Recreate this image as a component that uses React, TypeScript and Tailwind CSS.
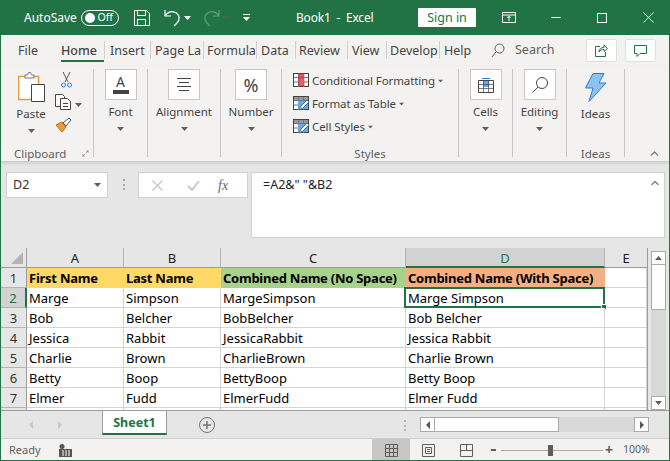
import { ChevronUp, Maximize2 } from 'lucide-react';

const tabs = [
  { label: 'File', w: 'w-[60px]', pl: 'pl-[17px]' },
  { label: 'Home', w: 'w-[43px]', pl: 'pl-[0px]', active: true },
  { label: 'Insert', w: 'w-[46px]', pl: 'pl-[6px]', sep: true },
  { label: 'Page La', w: 'w-[53px]', pl: 'pl-[5px]', sep: true },
  { label: 'Formula', w: 'w-[53px]', pl: 'pl-[4px]', sep: true },
  { label: 'Data', w: 'w-[39px]', pl: 'pl-[5px]', sep: true },
  { label: 'Review', w: 'w-[52px]', pl: 'pl-[4px]', sep: true },
  { label: 'View', w: 'w-[39px]', pl: 'pl-[5px]', sep: true },
  { label: 'Develop', w: 'w-[53px]', pl: 'pl-[4px]', sep: true },
  { label: 'Help', w: 'w-[39px]', pl: 'pl-[5px]', sep: true },
];

const rows = [
  ['Marge', 'Simpson'],
  ['Bob', 'Belcher'],
  ['Jessica', 'Rabbit'],
  ['Charlie', 'Brown'],
  ['Betty', 'Boop'],
  ['Elmer', 'Fudd'],
];

function Caret({ className = '' }: { className?: string }) {
  return (
    <svg width="7" height="4" viewBox="0 0 7 4" className={className}>
      <path d="M0 0h7L3.5 4z" fill="#605e5c" />
    </svg>
  );
}

function BigGroup({ label, width, children }: { label: string; width: string; children: React.ReactNode }) {
  return (
    <div className={`${width} h-[88px] mt-[3px] border-r border-[#c8c6c4] flex flex-col items-center shrink-0`}>
      <div className="w-[32px] h-[31px] bg-white border border-[#c8c6c4] flex items-center justify-center">
        {children}
      </div>
      <div className="mt-[4px] text-[11.5px] leading-[16px] text-[#444]">{label}</div>
      <Caret className="mt-[7px]" />
    </div>
  );
}

function StyleRow({ label, children }: { label: string; children: React.ReactNode }) {
  return (
    <div className="h-[23px] flex items-center gap-[3px] text-[11.5px] tracking-[-0.1px] text-[#444]">
      {children}
      <span>{label}</span>
      <Caret className="-ml-[1px] scale-75" />
    </div>
  );
}

function TableIcon({ brush = false }: { brush?: boolean }) {
  return (
    <svg width="16" height="15" viewBox="0 0 16 15">
      <rect x="0.5" y="0.5" width="15" height="13" fill="#fff" stroke="#444" />
      <path d="M1 1h14v3H1z" fill="#6b6b6b" opacity={brush ? 0.7 : 0} />
      <path d="M5.5 1v13M10.5 1v13M1 4.5h14M1 9h14" stroke="#777" />
      {brush ? (
        <>
          <path d="M5 5h10v8H5z" fill="#69a9e3" />
          <path d="M6 14l2-4 6-6 2 2-6 6z" fill="#fff" stroke="#2b6cb0" />
        </>
      ) : (
        <path d="M6 1h5v3H6zM6 5h5v8H6z" fill="#e8606a" stroke="#c6303b" strokeWidth="0.6" />
      )}
    </svg>
  );
}

function Cell({ children, className = 'bg-white border-[#d4d4d4]' }: { children?: React.ReactNode; className?: string }) {
  return (
    <div className={`h-[20px] border-r border-b pl-[2px] text-[13px] leading-[20px] text-black whitespace-nowrap ${className}`}>
      {children}
    </div>
  );
}

function HeaderCell({ children, className }: { children: React.ReactNode; className: string }) {
  return <Cell className={`font-bold text-[12.5px] tracking-[-0.25px] ${className}`}>{children}</Cell>;
}

function RowHead({ n, active = false }: { n?: number; active?: boolean }) {
  return (
    <div className={`h-[20px] border-b border-[#b4b4b4] text-[13px] leading-[20px] text-center ${active ? 'bg-[#d2d2d2] border-r-2 border-r-[#217346] text-[#217346]' : 'bg-[#e6e6e6] border-r border-r-[#9c9c9c] text-[#333]'}`}>
      {n}
    </div>
  );
}

function ColHead({ label, active = false }: { label: string; active?: boolean }) {
  return (
    <div className={`h-[20px] text-center text-[13px] leading-[20px] border-r ${active ? 'bg-[#d2d2d2] border-r-[#b4b4b4] border-b-2 border-b-[#217346] text-[#217346]' : 'bg-[#e6e6e6] border-r-[#b4b4b4] border-b border-b-[#9c9c9c] text-[#222]'}`}>
      {label}
    </div>
  );
}

export default function App() {
  return (
    <div className="w-[670px] h-[461px] overflow-hidden flex flex-col border-x border-b border-[#217346] bg-[#e6e6e6] font-['Noto_Sans',sans-serif] select-none">
      {/* title bar */}
      <div className="h-[35px] -mx-px shrink-0 bg-[#217346] flex items-center text-white text-[12.5px]">
        <span className="ml-[24px] w-[57px] text-[12px]">AutoSave</span>
        <div className="w-[38px] h-[16px] rounded-full border border-white flex items-center justify-between px-[3px]">
          <span className="w-[10px] h-[10px] rounded-full bg-white" />
          <span className="text-[10.5px] leading-none mr-[2px]">Off</span>
        </div>
        <svg width="16" height="16" viewBox="0 0 16 16" className="ml-[15px]" fill="none" stroke="#fff">
          <path d="M.5.5h12l3 3v12H.5zM3.5.5v5h8v-5M3.5 15.5v-6h8v6" />
        </svg>
        <svg width="18" height="18" viewBox="0 0 18 18" className="ml-[14px]" fill="none" stroke="#fff" strokeWidth="1.2">
          <path d="M1 1v6h6M1.5 6.5C4 3 8 2 11.5 3.5 16 6 16 11 13 14l-3 3" />
        </svg>
        <Caret className="ml-[2px] brightness-[8]" />
        <svg width="18" height="18" viewBox="0 0 18 18" className="ml-[11px]" fill="none" stroke="#5d9c7f" strokeWidth="1.2">
          <path d="M17 1v6h-6M16.500 6.500C14 3 10 2 6.500 3.500 2 6 2 11 5 14l3 3" />
        </svg>
        <Caret className="ml-[2px] opacity-50" />
        <svg width="7" height="8" viewBox="0 0 7 8" className="ml-[14px]">
          <path d="M0 0h7v1H0zM0 3h7L3.500 7z" fill="#fff" />
        </svg>
        <span className="ml-[46px] w-[122px] whitespace-nowrap text-[12px] tracking-[-0.2px]">Book1&nbsp;&nbsp;-&nbsp;&nbsp;Excel</span>
        <div className="w-[58px] h-[19px] bg-white rounded-[1px] text-[#217346] text-center leading-[19px]">Sign in</div>
        <svg width="14" height="11" viewBox="0 0 14 11" className="ml-[26px]" fill="none" stroke="#fff">
          <path d="M.500.500h13v10H.500zM.500 3h13M7 9V4.500M5 6l2-2 2 2" />
        </svg>
        <div className="ml-[35px] w-[10px] h-px bg-white" />
        <div className="ml-[36px] w-[10px] h-[10px] border border-white" />
        <svg width="11" height="11" viewBox="0 0 11 11" className="ml-[36px]" stroke="#fff">
          <path d="M.500.500l10 10M10.500.500l-10 10" />
        </svg>
      </div>

      {/* tabs */}
      <div className="h-[31px] shrink-0 bg-[#f3f2f1] flex items-center text-[12.5px] text-[#444]">
        {tabs.map((t) => (
          <div key={t.label} className={`${t.w} ${t.pl} relative h-[31px] leading-[31px] whitespace-nowrap shrink-0`}>
            {t.sep && <span className="absolute left-0 top-[6px] h-[18px] w-px bg-[#d2d0ce]" />}
            <span className={`block ${t.active ? 'font-medium border-b-2 border-[#217346] h-[27px]' : ''}`}>{t.label}</span>
          </div>
        ))}
        <svg width="14" height="15" viewBox="0 0 14 15" className="ml-[13px] shrink-0" fill="none" stroke="#605e5c">
          <circle cx="8.500" cy="5.500" r="4.500" />
          <path d="M5 9l-4 5" />
        </svg>
        <span className="ml-[10px] w-[71px] text-[#605e5c]">Search</span>
        <div className="w-[31px] h-[23px] bg-white rounded-[2px] border border-[#e1dfdd] flex items-center justify-center">
          <svg width="13" height="13" viewBox="0 0 13 13" fill="none" stroke="#217346">
            <path d="M5 2.500H.500v10h10V8M4 8c0-3 2-4.500 5-4.500V1l3.500 3.500L9 7.500V5.500C7 5.500 5 6 4 8z" />
          </svg>
        </div>
        <div className="ml-[8px] w-[31px] h-[23px] bg-white rounded-[2px] border border-[#e1dfdd] flex items-center justify-center">
          <svg width="13" height="12" viewBox="0 0 13 12" fill="none" stroke="#217346">
            <path d="M.500.500h12v8H6l-3 3v-3H.500z" />
          </svg>
        </div>
      </div>

      {/* ribbon */}
      <div className="h-[95px] shrink-0 bg-[#f3f2f1] shadow-[0_2px_3px_#c8c8c8] flex relative">
        <div className="w-[93px] h-[88px] mt-[3px] border-r border-[#c8c6c4] relative shrink-0 flex">
          <div className="w-[52px] flex flex-col items-center pl-[8px]">
            <svg width="27" height="30" viewBox="0 0 27 30" className="mt-[3px]">
              <path d="M.5 4.500h20v23H.5z" fill="#fff" stroke="#e69a3c" strokeWidth="1.500" />
              <path d="M7 4.500V3h2.500L10.500.500l2 0L13.500 3H16v3H7z" fill="#fff" stroke="#777" />
              <path d="M13.500 12.500h13v17h-13z" fill="#fff" stroke="#444" />
            </svg>
            <span className="mt-[4px] text-[11.5px] leading-[16px] text-[#444]">Paste</span>
            <Caret className="mt-[7px]" />
          </div>
          <div className="w-[26px] ml-[2px] flex flex-col items-start">
            <svg width="11" height="16" viewBox="0 0 11 16" className="mt-[3px] ml-[6px]" fill="none">
              <path d="M2 0l5 10M9 0L4 10" stroke="#555" />
              <circle cx="2.500" cy="13" r="2" stroke="#2b7cd3" />
              <circle cx="8.500" cy="13" r="2" stroke="#2b7cd3" />
            </svg>
            <svg width="17" height="16" viewBox="0 0 17 16" className="mt-[6px]" fill="#fff" stroke="#444">
              <path d="M.500.500h7l2 2v10H.500z" />
              <path d="M5.500 4.500h7l3 3v8h-10z" />
              <path d="M8 9.500h5M8 12.500h5" />
            </svg>
            <svg width="17" height="16" viewBox="0 0 17 16" className="mt-[7px]">
              <path d="M1 8l6 7 4-5-4-5z" fill="#ed9a3c" stroke="#c46a10" />
              <path d="M8 6l6-5 2 2-5 6z" fill="#fff" stroke="#555" />
            </svg>
          </div>
          <Caret className="absolute left-[74px] top-[34px]" />
          <span className="absolute left-[13px] top-[77px] text-[11.5px] leading-[16px] text-[#605e5c]">Clipboard</span>
          <Maximize2 className="absolute left-[81px] top-[81px] w-[7px] h-[7px] text-[#777]" />
        </div>

        <BigGroup label="Font" width="w-[54px]">
          <div className="flex flex-col items-center">
            <span className="text-[14px] leading-[13px] text-[#444]">A</span>
            <span className="w-[16px] h-[4px] bg-[#444] mt-[2px]" />
          </div>
        </BigGroup>
        <BigGroup label="Alignment" width="w-[73px]">
          <svg width="14" height="13" viewBox="0 0 14 13" stroke="#444">
            <path d="M0 .500h14M2 4.500h10M0 8.500h14M2 12.500h10" />
          </svg>
        </BigGroup>
        <BigGroup label="Number" width="w-[61px]">
          <span className="text-[18px] leading-none text-[#444]">%</span>
        </BigGroup>

        <div className="w-[177px] h-[88px] mt-[3px] border-r border-[#c8c6c4] pl-[11px] relative shrink-0">
          <StyleRow label="Conditional Formatting"><TableIcon /></StyleRow>
          <StyleRow label="Format as Table"><TableIcon brush /></StyleRow>
          <StyleRow label="Cell Styles"><TableIcon brush /></StyleRow>
          <span className="absolute left-0 right-0 top-[77px] text-center text-[11.5px] leading-[16px] text-[#605e5c]">Styles</span>
        </div>

        <BigGroup label="Cells" width="w-[54px]">
          <svg width="16" height="16" viewBox="0 0 16 16" fill="none" stroke="#444">
            <path d="M4 1.500h8" stroke="#2b7cd3" />
            <path d="M.500 3.500h15v12H.500z" />
            <path d="M5 4h6v6H5z" fill="#69a9e3" stroke="none" />
            <path d="M5.500 4v11M10.500 4v11M1 7.500h14M1 11.500h14" strokeWidth="0.700" />
          </svg>
        </BigGroup>
        <BigGroup label="Editing" width="w-[54px]">
          <svg width="16" height="16" viewBox="0 0 16 16" fill="none" stroke="#444">
            <circle cx="10" cy="6" r="5.500" />
            <path d="M6 10l-5.500 5.500" />
          </svg>
        </BigGroup>

        <div className="w-[58px] h-[88px] mt-[3px] border-r border-[#c8c6c4] flex flex-col items-center relative shrink-0">
          <svg width="22" height="29" viewBox="0 0 22 29" className="mt-[4px]">
            <path d="M8 .500h11L14 10h7L4 28.500 8 15H.500z" fill="#8fc1ee" stroke="#2b7cd3" />
          </svg>
          <span className="mt-[4px] text-[11.5px] leading-[16px] text-[#444]">Ideas</span>
          <span className="absolute left-0 right-0 top-[77px] text-center text-[11.5px] leading-[16px] text-[#605e5c]">Ideas</span>
        </div>
        <ChevronUp className="absolute left-[647px] top-[81px] w-[13px] h-[13px] text-[#777]" strokeWidth={2.500} />
      </div>

      {/* formula bar */}
      <div className="h-[87px] shrink-0 flex items-start pt-[11px] pl-[5px] text-[12.5px]">
        <div className="w-[102px] h-[26px] bg-white border border-[#d0d0d0] flex items-center justify-between pl-[6px] pr-[6px] text-[#333]">
          <span>D2</span>
          <Caret />
        </div>
        <div className="w-[3px] h-[11px] ml-[15px] mt-[7px] border-l-2 border-dotted border-[#aaa]" />
        <div className="ml-[12px] w-[110px] h-[26px] bg-white border border-[#d0d0d0] flex items-center text-[#c8c8c8]">
          <svg width="11" height="11" viewBox="0 0 11 11" className="ml-[13px]" stroke="#c8c8c8" strokeWidth="1.500">
            <path d="M.500.500l10 10M10.500.500l-10 10" />
          </svg>
          <svg width="13" height="11" viewBox="0 0 13 11" className="ml-[24px]" fill="none" stroke="#c8c8c8" strokeWidth="2">
            <path d="M1 6l4 4 7-9" />
          </svg>
          <span className="ml-[18px] font-['Liberation_Serif',serif] italic text-[14px] text-[#666]">fx</span>
        </div>
        <div className="ml-[3px] w-[414px] h-[66px] bg-white border border-[#d0d0d0] pl-[11px] pt-[3px] text-[#222] relative">
          =A2&amp;" "&amp;B2
          <ChevronUp className="absolute right-[3px] top-[4px] w-[12px] h-[12px] text-[#777]" strokeWidth={2.500} />
        </div>
      </div>

      {/* sheet */}
      <div className="h-[162px] shrink-0 flex overflow-hidden">
        <div className="w-[646px] shrink-0 grid grid-cols-[26px_97px_97px_185px_199px_42px] content-start">
          <div className="h-[20px] bg-[#e6e6e6] border-r border-b border-[#9c9c9c] relative overflow-hidden">
            <span className="absolute right-[3px] bottom-[3px] w-0 h-0 border-l-[12px] border-b-[12px] border-l-transparent border-b-[#b4b4b4]" />
          </div>
          <ColHead label="A" />
          <ColHead label="B" />
          <ColHead label="C" />
          <ColHead label="D" active />
          <div className="h-[20px] bg-[#e6e6e6] border-b border-b-[#9c9c9c] text-center text-[13px] leading-[20px] text-[#222]">E</div>

          <RowHead n={1} />
          <HeaderCell className="bg-[#ffd966] border-[#ffd966]">First Name</HeaderCell>
          <HeaderCell className="bg-[#ffd966] border-[#ffd966]">Last Name</HeaderCell>
          <HeaderCell className="bg-[#a9d18e] border-[#a9d18e]">Combined Name (No Space)</HeaderCell>
          <HeaderCell className="bg-[#f4b084] border-[#f4b084]">Combined Name (With Space)</HeaderCell>
          <Cell />

          {rows.map(([first, last], i) => (
            <div key={first} className="contents">
              <RowHead n={i + 2} active={i === 0} />
              <Cell>{first}</Cell>
              <Cell>{last}</Cell>
              <Cell>{first + last}</Cell>
              <Cell className="bg-white border-[#d4d4d4] relative">
                {first + ' ' + last}
                {i === 0 && (
                  <>
                    {/* selected cell outline */}
                    <span className="absolute -left-[2px] -top-[1px] w-[201px] h-[21px] border-2 border-[#217346]" />
                    <span className="absolute -right-[3px] -bottom-[3px] w-[6px] h-[6px] bg-[#217346] border border-white" />
                  </>
                )}
              </Cell>
              <Cell />
            </div>
          ))}
          <RowHead />
          <Cell />
          <Cell />
          <Cell />
          <Cell />
          <Cell />
        </div>
        <div className="w-px shrink-0 bg-[#9c9c9c]" />
        <div className="ml-[3px] w-[15px] mt-[3px] h-[159px] bg-[#d8d8d8] flex flex-col">
          <div className="h-[14px] bg-white border border-[#aaa] flex items-center justify-center"><Caret className="rotate-180" /></div>
          <div className="h-[45px] bg-white border-x border-b border-[#aaa]" />
          <div className="flex-1" />
          <div className="h-[14px] bg-white border border-[#aaa] flex items-center justify-center"><Caret /></div>
        </div>
      </div>

      {/* sheet tabs */}
      <div className="h-[29px] shrink-0 border-t border-t-[#9c9c9c] border-b border-b-[#d0d0d0] flex items-start bg-[#e6e6e6]">
        <svg width="4" height="8" viewBox="0 0 4 8" className="ml-[28px] mt-[10px]"><path d="M4 0v8L0 4z" fill="#c8c8c8" /></svg>
        <svg width="4" height="8" viewBox="0 0 4 8" className="ml-[25px] mt-[10px]"><path d="M0 0v8l4-4z" fill="#c8c8c8" /></svg>
        <div className="ml-[40px] w-[65px] h-[24px] bg-white border-x border-[#9c9c9c] border-b-2 border-b-[#217346] text-[#217346] font-bold text-[12.5px] leading-[24px] text-center">Sheet1</div>
        <svg width="16" height="16" viewBox="0 0 16 16" className="ml-[32px] mt-[6px]" fill="none" stroke="#777">
          <circle cx="8" cy="8" r="7.500" />
          <path d="M8 4v8M4 8h8" strokeWidth="1.500" />
        </svg>
        <div className="ml-[189px] mt-[9px] w-[2px] h-[11px] border-l-2 border-dotted border-[#b4b4b4]" />
        <div className="ml-[14px] mt-[6px] w-[229px] h-[15px] flex bg-[#d8d8d8]">
          <div className="w-[15px] bg-white border border-[#aaa] flex items-center justify-center">
            <svg width="4" height="8" viewBox="0 0 4 8"><path d="M4 0v8L0 4z" fill="#555" /></svg>
          </div>
          <div className="w-[124px] bg-white border-y border-r border-[#aaa]" />
          <div className="flex-1" />
          <div className="w-[15px] bg-white border border-[#aaa] flex items-center justify-center">
            <svg width="4" height="8" viewBox="0 0 4 8"><path d="M0 0v8l4-4z" fill="#555" /></svg>
          </div>
        </div>
      </div>

      {/* status bar */}
      <div className="flex-1 bg-[#f3f2f1] flex items-center text-[11px] text-[#605e5c]">
        <span className="ml-[8px] w-[50px]">Ready</span>
        <svg width="13" height="13" viewBox="0 0 13 13">
          <circle cx="3" cy="2.500" r="2.500" fill="#555" />
          <path d="M0 5h13v8H0z" fill="#555" />
          <path d="M3 7h2M6 7h2M9 7h2M3 9h2M6 9h2M9 9h2M3 11h2M6 11h2M9 11h2" stroke="#fff" />
        </svg>
        <div className="ml-[300px] w-[38px] h-[22px] bg-[#c8c6c4] flex items-center justify-center">
          <svg width="13" height="13" viewBox="0 0 13 13" fill="none" stroke="#605e5c"><path d="M.500.500h12v12H.500zM4.500.500v12M8.500.500v12M.500 4.500h12M.500 8.500h12" /></svg>
        </div>
        <svg width="13" height="13" viewBox="0 0 13 13" className="ml-[12px]" fill="none" stroke="#605e5c"><path d="M.500.500h12v12H.500zM3.500 3.500h6v6h-6zM5 5.500h3M5 7.500h3" /></svg>
        <svg width="13" height="13" viewBox="0 0 13 13" className="ml-[25px]" fill="none" stroke="#605e5c"><path d="M.500.500h12v12H.500zM6.500.500v6M.500 6.500h12" /></svg>
        <div className="ml-[18px] w-[5px] h-[2px] bg-[#605e5c]" />
        <div className="ml-[5px] w-[102px] h-px bg-[#aaa] relative">
          <span className="absolute left-[47px] -top-[5px] w-[5px] h-[11px] bg-[#605e5c]" />
        </div>
        <span className="ml-[2px] w-[18px] text-[14px] font-bold leading-none">+</span>
        <span className="text-[10.5px] text-[#605e5c]">100%</span>
      </div>
    </div>
  );
}
